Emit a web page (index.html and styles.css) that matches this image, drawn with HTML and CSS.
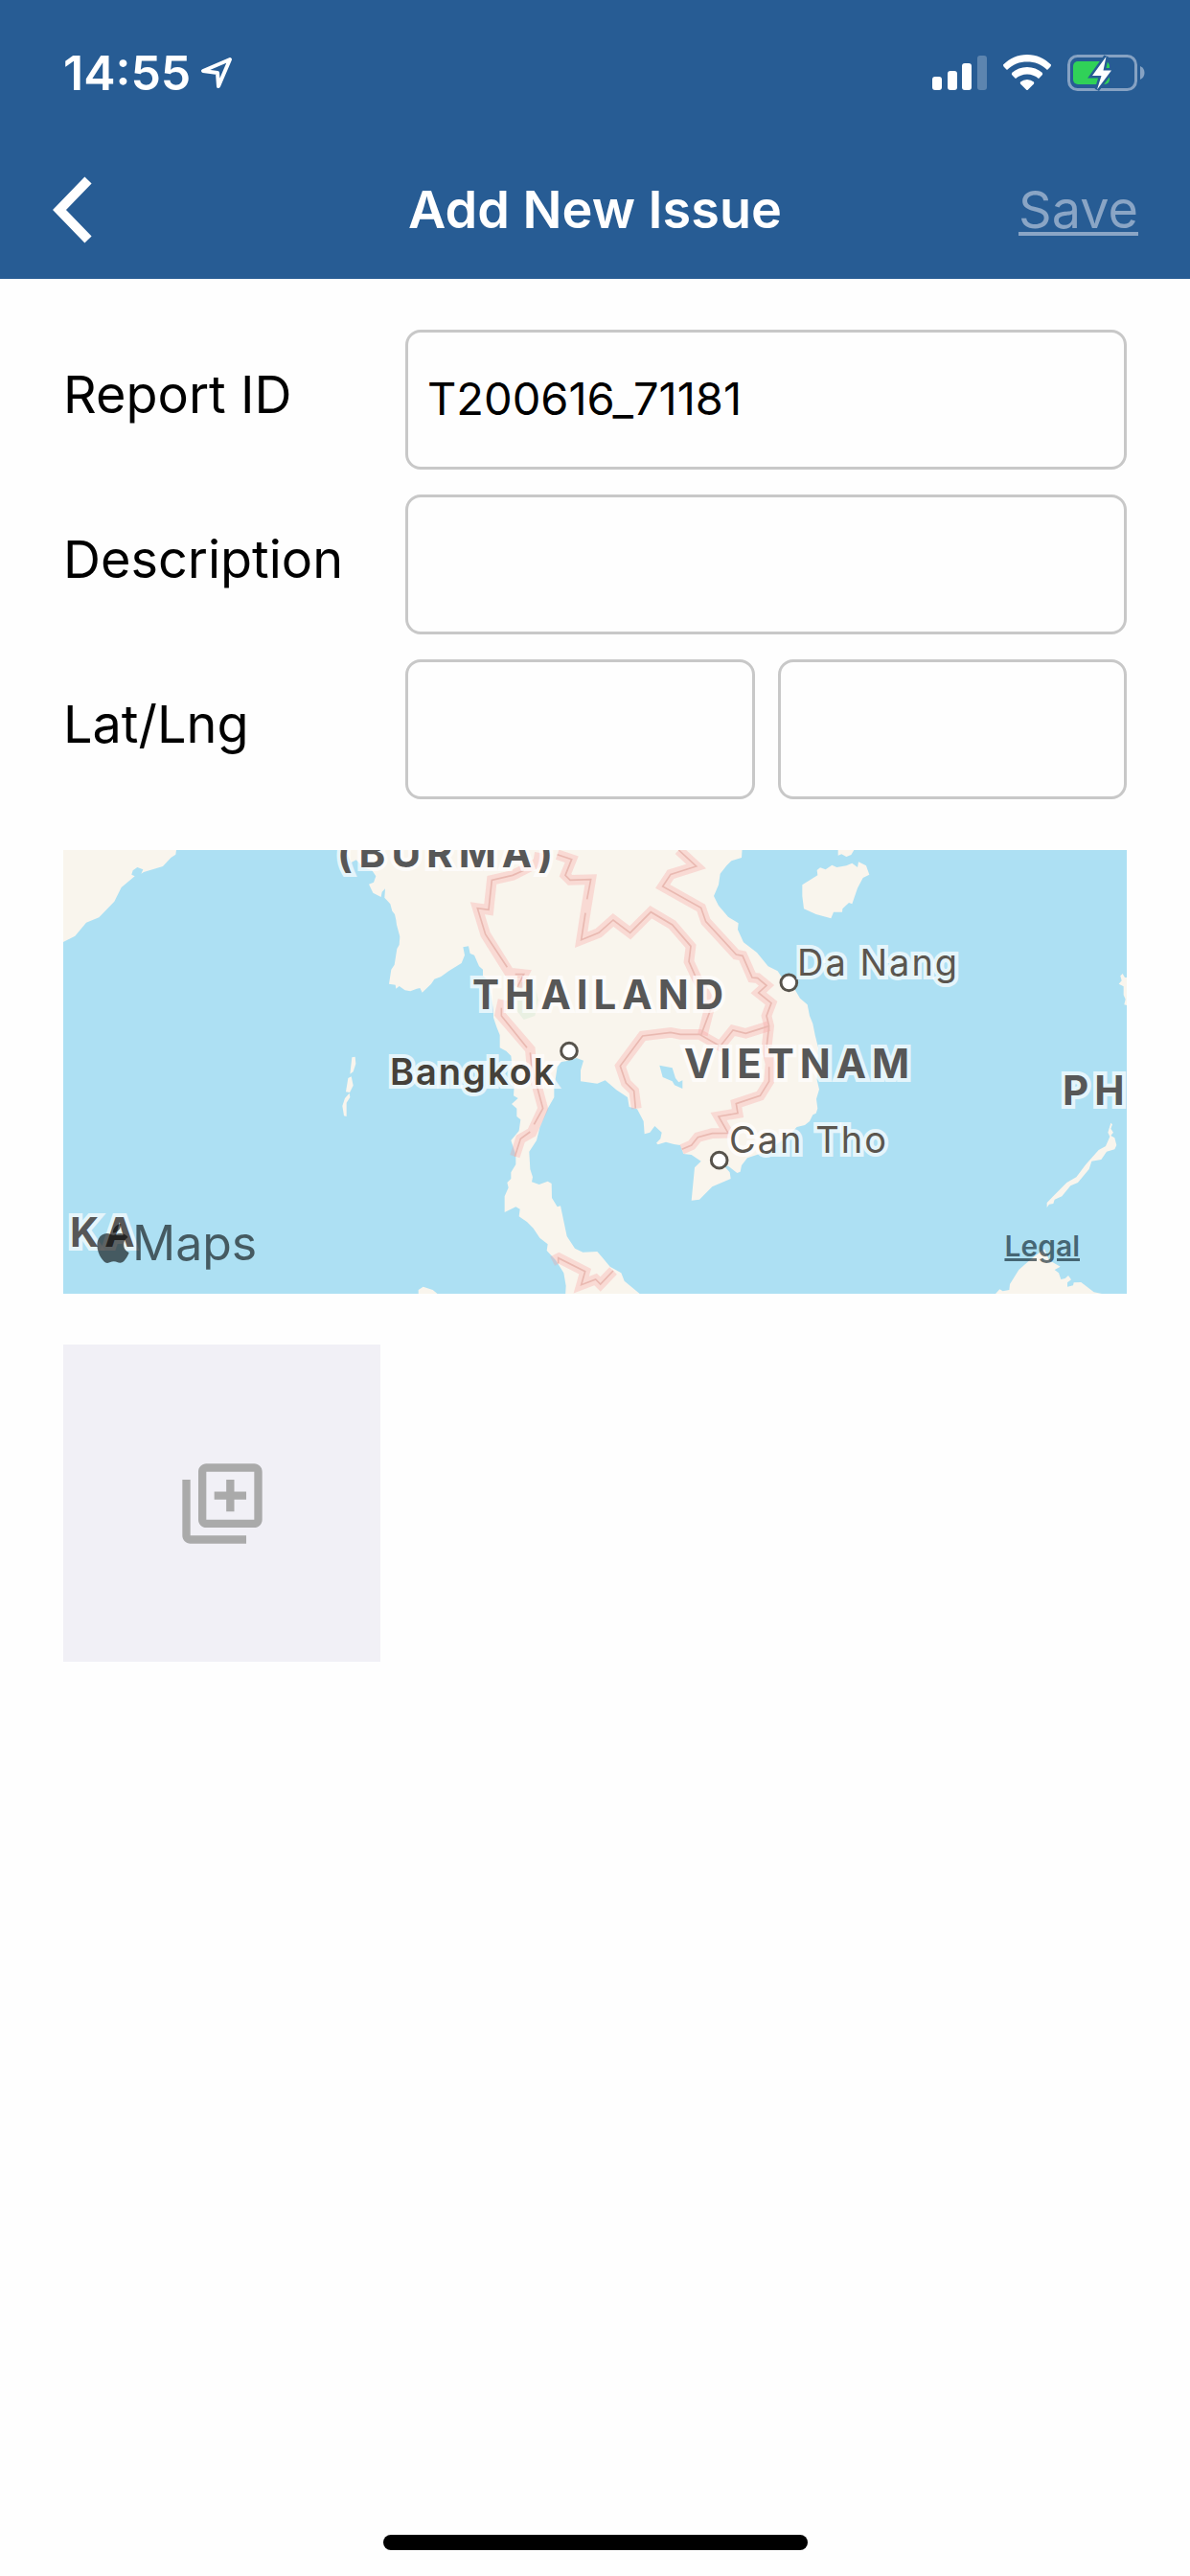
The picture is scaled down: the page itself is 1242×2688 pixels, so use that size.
FILE: index.html
```
<!DOCTYPE html>
<html lang="en">

<head>
    <meta charset="UTF-8">
    <meta name="viewport" content="width=device-width, initial-scale=1.0">
    <title>Add New Issue</title>
    <link rel="stylesheet" href="styles.css">
</head>

<body>
    <header class="header">
        <div class="status-bar">
            <div class="status-left">
                <span class="time">14:55</span>
                <svg class="location" viewBox="0 0 34 34">
                    <path d="M31 3 L3 15 L18 17 L19 31 Z" />
                </svg>
            </div>
            <div class="status-right">
                <svg class="signal" viewBox="0 0 57 38">
                    <rect x="0" y="23" width="10" height="14" rx="3" />
                    <rect x="16" y="17" width="10" height="20" rx="3" />
                    <rect x="31" y="9" width="10" height="28" rx="3" />
                    <rect x="47" y="1" width="10" height="36" rx="3" opacity="0.25" />
                </svg>
                <svg class="wifi" viewBox="0 0 50 38">
                    <path d="M25 0 C35 0 43 4 50 10.500 Q50 12 49 13 L46 16 C40 10 33 7.500 25 7.500 C17 7.500 10 10 4 16 L1 13 Q0 12 0 10.500 C7 4 15 0 25 0 Z" />
                    <path d="M25 13 C31 13 36.500 15 41 19 Q41.500 20.500 40.500 21.500 L37 25 C33.500 22 29.500 20.500 25 20.500 C20.500 20.500 16.500 22 13 25 L9.500 21.500 Q8.500 20.500 9 19 C13.500 15 19 13 25 13 Z" />
                    <path d="M25 26 Q29 26 32 28.500 Q32.500 29.500 32 30.500 L26 36.500 Q25 37.500 24 36.500 L18 30.500 Q17.500 29.500 18 28.500 Q21 26 25 26 Z" />
                </svg>
                <svg class="battery" viewBox="0 0 81 38">
                    <rect class="battery-frame" x="1.500" y="1.500" width="70" height="35" rx="9" />
                    <path class="battery-nub" d="M76 12 Q80.500 14 80.500 19 Q80.500 24 76 26 Z" />
                    <rect class="battery-level" x="6" y="7" width="38" height="24" rx="5" />
                    <path class="battery-bolt" d="M40.500 2 L26 22 H35.500 L31 36.500 L46 16.500 H37.500 Z" />
                </svg>
            </div>
        </div>
        <nav class="nav-bar">
            <button class="back" aria-label="Back">
                <svg viewBox="0 0 42 70">
                    <path d="M38 4 L8 35 L38 66" />
                </svg>
            </button>
            <h1>Add New Issue</h1>
            <button class="save" disabled>Save</button>
        </nav>
    </header>

    <main class="content">
        <form class="issue-form">
            <div class="row">
                <label for="report-id">Report ID</label>
                <input type="text" id="report-id" value="T200616_71181">
            </div>
            <div class="row">
                <label for="description">Description</label>
                <input type="text" id="description">
            </div>
            <div class="row">
                <label for="lat">Lat/Lng</label>
                <input type="text" id="lat">
                <input type="text" id="lng" aria-label="Longitude">
            </div>
        </form>

        <div class="map">
            <svg class="map-shapes" viewBox="-1002 21 3330 1389" preserveAspectRatio="xMinYMin slice">
                <g class="land">
                    <!-- india, andaman -->
                    <g transform="translate(-1020 0)">
                        <path d="M0 0H375L370 35 355 45 330 72 270 90 262 95 268 82 250 75 236 85 232 98 242 103 200 138 178 182 130 232 90 248 55 290 0 318Z" />
                        <path d="M922 670L932 668 934 690 926 715 916 722Z" />
                        <path d="M910 735L920 730 926 758 915 780 903 778Z" />
                        <path d="M914 782L916 795 905 812 905 855 897 853 892 822 900 798Z" />
                    </g>
                    <!-- mainland -->
                    <path d="M-130 0L-100 60 -85 52 -62 75 -35 85 -23 103 -30 122 -45 128 -32 155 -7 168 -4 152 6 142 4 170 22 190 28 212 36 222 40 240 42 255 52 292 50 318 43 330 35 380 25 395 18 440 38 443 40 455 50 447 68 460 85 463 105 455 115 453 122 467 150 440 160 425 180 418 205 400 245 375 255 350 250 325 267 322 272 345 285 350 300 385 312 395 312 415 330 430 345 520 345 545 355 575 365 600 365 640 385 650 400 665 410 760 408 790 422 798 402 816 418 830 418 855 430 865 425 900 400 930 415 975 415 1005 400 1030 400 1050 388 1062 392 1078 380 1105 380 1155 415 1138 428 1145 425 1168 450 1185 470 1205 490 1235 515 1255 512 1275 540 1305 565 1345 572 1385 570 1420 815 1420 755 1370 745 1345 710 1325 685 1295 670 1278 625 1280 600 1268 575 1230 555 1135 545 1138 528 1110 527 1065 515 1058 488 1068 465 1060 468 1045 460 1020 457 965 480 930 490 890 515 830 535 795 535 765 545 700 555 685 580 680 605 672 627 680 618 710 618 745 670 752 695 742 730 772 765 795 770 825 795 832 815 870 818 910 835 905 850 885 872 905 868 925 855 938 860 943 885 935 910 942 930 945 940 972 965 975 995 995 975 1015 965 1118 990 1115 1010 1095 1030 1075 1088 1050 1085 1030 1065 1008 1080 1010 1108 1032 1118 1028 1122 1008 1140 985 1200 965 1270 915 1295 888 1320 882 1335 870 1345 850 1355 845 1360 830 1356 800 1365 770 1358 740 1362 640 1352 600 1345 565 1335 540 1328 505 1305 485 1290 460 1255 430 1235 400 1205 385 1170 342 1128 310 1110 270 1112 250 1080 230 1050 195 1035 165 1050 130 1055 95 1075 70 1090 55 1122 45 1125 0Z" />
                    <path d="M110 1420L110 1398 125 1388 155 1398 172 1412V1420Z" />
                    <!-- hainan, philippines, borneo -->
                    <g transform="translate(1140 0)">
                        <path d="M284 0V38L295 34 310 42 325 36 334 21V0Z" />
                        <path d="M172 130L220 100 218 84 228 76 245 82 265 68 280 75 310 70 328 62 345 75 348 58 372 70 382 98 362 108 345 140 328 190 318 186 298 205 297 215 270 215 262 235 215 222 177 205 172 165Z" />
                        <path d="M1175 408L1168 415 1172 430 1163 440 1178 448 1178 475 1184 488 1180 505 1200 510V420H1182Z" />
                        <path d="M1138 875L1143 880 1138 893 1146 905 1138 915 1150 922 1156 945 1150 958 1125 965 1108 990 1078 995 1070 1020 1035 1062 1012 1072 985 1105 962 1115 958 1128 945 1130 938 1140 938 1125 962 1100 1000 1062 1030 1045 1060 1005 1100 960 1122 948 1135 918 1129 905Z" />
                        <path d="M768 1420L790 1396 800 1402 820 1398 822 1380 850 1335 890 1300 930 1270 945 1305 980 1325 962 1335 975 1345 982 1365 995 1362 1005 1353 1014 1366 1002 1375 1002 1388 1020 1384 1022 1375 1045 1374 1085 1405 1120 1412V1420Z" />
                    </g>
                </g>
                <path class="park" d="M420 440L470 420 485 490 475 540 440 552 415 520Z" />
                <path class="lake" d="M865 695L905 703 915 735 925 748 937 742 937 768 912 757 905 745 875 732Z" />
                <g class="border-glow">
                    <path d="M490 30L485 60 405 100 340 115 330 208 295 203 320 285 395 405 440 410 420 450" />
                    <path d="M375 490L365 535 460 645 465 700 500 830 465 905 430 925 412 980" />
                    <path d="M545 35L590 50 570 100 585 115 650 113 635 205 620 302 675 280 720 240 773 280 838 215 905 255 963 322 957 370 985 430 1025 500 1000 600" />
                    <path d="M925 21L980 72 900 97 875 135 995 202 1010 245 1105 348 1125 352 1155 420 1172 422 1200 445 1175 468 1215 500 1200 540 1208 572 1200 640 1212 690 1208 745 1180 790 1105 815 1110 845 1050 855 1080 907 1030 908 985 920 965 945 935 958" />
                    <path d="M1208 572L1135 595 1095 585 1055 635 990 598 930 598 900 592 812 603 742 697 760 750 785 775 793 830" />
                    <path d="M530 1308L550 1298 632 1340 620 1382 665 1365 680 1380 720 1338" />
                </g>
                <g class="border-line">
                    <path d="M440 85L405 100 340 115 330 208 295 203 320 285 388 388M413 410H440L420 450" />
                    <path d="M370 515V540L450 640M460 655L465 700 500 830 472 880M460 903L430 925 412 980" />
                    <path d="M545 35L590 50 570 100 585 115 650 113 638 175M633 218L620 302 675 280 720 240 773 280 838 215 905 255 963 322 957 370 978 418" />
                    <path d="M925 21L980 72 900 97 875 135 995 202 1010 245 1105 348 1125 352 1155 420 1172 422 1200 445 1175 468 1215 500 1200 540 1208 572 1200 640M1208 700V745L1180 790 1105 815 1110 845 1050 855 1080 907 1030 908 985 920 965 945 935 958" />
                    <path d="M1025 520L995 600M1208 572L1135 595 1095 585 1055 635 990 598 930 598 900 592 812 603 742 697 760 750 785 775 790 830" />
                    <path d="M548 1315V1298L632 1340 620 1382 665 1365 680 1380 720 1338" />
                </g>
                <g class="city-dot">
                    <circle cx="582" cy="650" r="25" />
                    <circle cx="1052" cy="992" r="25" />
                    <circle cx="1270" cy="436" r="25" />
                </g>
            </svg>
            <span class="country burma">(BURMA)</span>
            <span class="country thailand">THAILAND</span>
            <span class="country vietnam">VIETNAM</span>
            <span class="country philippines">PH</span>
            <span class="country lanka">KA</span>
            <span class="city bangkok">Bangkok</span>
            <span class="city da-nang">Da Nang</span>
            <span class="city can-tho">Can Tho</span>
            <div class="map-brand">
                <svg viewBox="2 0 20 24">
                    <path d="M12.152 6.896c-.948 0-2.415-1.078-3.960-1.040-2.040.027-3.910 1.183-4.961 3.014-2.117 3.675-.546 9.103 1.519 12.090 1.013 1.454 2.208 3.090 3.792 3.039 1.520-.065 2.090-.987 3.935-.987 1.831 0 2.350.987 3.960.948 1.637-.026 2.676-1.480 3.676-2.948 1.156-1.688 1.636-3.325 1.662-3.415-.039-.013-3.182-1.221-3.220-4.857-.026-3.040 2.480-4.494 2.597-4.559-1.429-2.090-3.623-2.324-4.390-2.376-2-.156-3.675 1.090-4.610 1.090zM15.530 3.830c.843-1.012 1.400-2.427 1.245-3.830-1.207.052-2.662.805-3.532 1.818-.780.896-1.454 2.338-1.273 3.714 1.338.104 2.715-.688 3.559-1.701" />
                </svg>
                <span>Maps</span>
            </div>
            <a class="legal" href="#">Legal</a>
        </div>

        <button class="add-photo" aria-label="Add photo">
            <svg viewBox="0 0 24 24">
                <path d="M4 6H2v14c0 1.100.9 2 2 2h14v-2H4V6zm16-4H8c-1.100 0-2 .9-2 2v12c0 1.100.9 2 2 2h12c1.100 0 2-.9 2-2V4c0-1.100-.9-2-2-2zm0 14H8V4h12v12zM13 14h2v-3h3V9h-3V6h-2v3h-3v2h3z" />
            </svg>
        </button>
    </main>

    <div class="home-bar"></div>
</body>

</html>
```
FILE: styles.css
```
:root {
    --blue: #275c94;
    --water: #ade0f3;
    --land: #f9f5ed;
    --side: 66px;
}

* {
    box-sizing: border-box;
}

body {
    display: flex;
    flex-direction: column;
    margin: 0;
    min-height: 100vh;
    background-color: #fefefe;
    color: black;
    font-family: Inter, 'Liberation Sans', sans-serif;
}

button {
    padding: 0;
    border: none;
    background: none;
    font-family: inherit;
    cursor: pointer;
}

svg {
    display: block;
}

.header {
    background-color: var(--blue);
    color: white;
}

.status-bar {
    display: flex;
    justify-content: space-between;
    align-items: center;
    height: 152px;
    padding: 0 47px 0 var(--side);
}

.status-left,
.status-right {
    display: flex;
    align-items: center;
}

.status-left {
    gap: 10px;
}

.status-right {
    gap: 17px;
    fill: white;
}

.time {
    font-size: 50px;
    font-weight: 600;
}

.location {
    width: 34px;
    height: 34px;
    fill: none;
    stroke: white;
    stroke-width: 4;
    stroke-linejoin: round;
}

.signal {
    width: 57px;
    height: 38px;
}

.wifi {
    width: 50px;
    height: 38px;
}

.battery {
    width: 81px;
    height: 38px;
}

.battery-frame {
    fill: none;
    stroke: #86a2c3;
    stroke-width: 3;
}

.battery-nub {
    fill: #86a2c3;
}

.battery-level {
    fill: #30d158;
}

.battery-bolt {
    stroke: var(--blue);
    stroke-width: 5;
    paint-order: stroke;
}

.nav-bar {
    display: grid;
    grid-template-columns: 1fr auto 1fr;
    align-items: center;
    height: 139px;
    padding: 0 54px 6px 54px;
}

.nav-bar h1 {
    margin: 0;
    font-size: 54px;
    font-weight: 600;
}

.back {
    justify-self: start;
}

.back svg {
    width: 42px;
    height: 70px;
    fill: none;
    stroke: white;
    stroke-width: 10;
}

.save {
    justify-self: end;
    color: #8aa5c5;
    font-size: 54px;
    text-decoration: underline;
    text-decoration-thickness: 4px;
    text-underline-offset: 4px;
}

.content {
    display: flex;
    flex-direction: column;
    gap: 53px;
    padding: 53px var(--side);
}

.issue-form {
    display: flex;
    flex-direction: column;
    gap: 26px;
}

.row {
    display: flex;
    align-items: center;
    gap: 24px;
}

.row label {
    flex: none;
    width: 333px;
    padding-bottom: 12px;
    font-size: 54px;
}

.row input {
    flex: 1;
    min-width: 0;
    height: 146px;
    padding: 0 20px 4px;
    border: 3px solid #c8c8c8;
    border-radius: 16px;
    background-color: transparent;
    color: black;
    font-family: inherit;
    font-size: 47px;
}

.map {
    position: relative;
    height: 463px;
    overflow: hidden;
    background-color: var(--water);
}

.map-shapes {
    width: 100%;
    height: 100%;
}

.land {
    fill: var(--land);
}

.park {
    fill: #e9f0e2;
}

.lake {
    fill: var(--water);
}

.border-glow {
    fill: none;
    stroke: #fa9c9c;
    stroke-opacity: 0.3;
    stroke-width: 32;
}

.border-line {
    fill: none;
    stroke: #e9b9b1;
    stroke-width: 5;
}

.city-dot {
    fill: white;
    stroke: #57534c;
    stroke-width: 9;
}

.country,
.city {
    position: absolute;
    line-height: 40px;
    white-space: nowrap;
    paint-order: stroke;
    -webkit-text-stroke: 8px rgba(255, 255, 255, 0.7);
}

.country {
    color: #575757;
    font-size: 42px;
    font-weight: 700;
    letter-spacing: 6px;
}

.city {
    color: #5b564f;
    font-size: 38px;
    letter-spacing: 2px;
}

.burma {
    left: 286px;
    top: -17px;
}

.thailand {
    left: 427px;
    top: 131px;
}

.vietnam {
    left: 648px;
    top: 203px;
}

.philippines {
    left: 1043px;
    top: 231px;
}

.lanka {
    left: 7px;
    top: 379px;
}

.bangkok {
    left: 341px;
    top: 211px;
    color: #45413a;
    font-weight: 600;
}

.da-nang {
    left: 766px;
    top: 97px;
}

.can-tho {
    left: 695px;
    top: 282px;
}

.map-brand {
    position: absolute;
    left: 35px;
    bottom: 23px;
    display: flex;
    align-items: center;
    gap: 3px;
    color: rgba(0, 0, 0, 0.6);
    font-size: 50px;
    line-height: 60px;
}

.map-brand svg {
    width: 34px;
    height: 41px;
    fill: currentColor;
}

.legal {
    position: absolute;
    right: 49px;
    bottom: 32px;
    color: rgba(0, 20, 30, 0.6);
    font-size: 30px;
    font-weight: 600;
    text-underline-offset: 2px;
    text-decoration-thickness: 3px;
}

.add-photo {
    display: flex;
    align-items: center;
    justify-content: center;
    width: 331px;
    height: 331px;
    background-color: #f1f0f6;
}

.add-photo svg {
    width: 100px;
    height: 100px;
    fill: #aaaaaa;
}

.home-bar {
    align-self: center;
    width: 443px;
    height: 16px;
    margin-top: auto;
    margin-bottom: 27px;
    border-radius: 8px;
    background-color: black;
}
```
